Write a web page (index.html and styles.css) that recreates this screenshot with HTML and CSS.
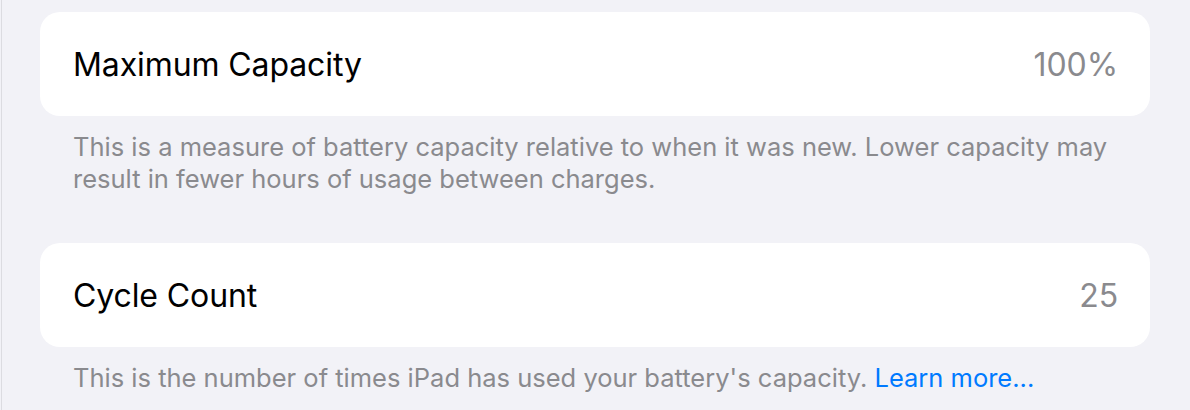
FILE: index.html
```html
<!DOCTYPE html>
<html lang="en">
<head>
<meta charset="utf-8">
<title>Battery Health</title>
<link rel="stylesheet" href="styles.css">
</head>
<body>
<div class="page">
  <section class="group">
    <div class="card">
      <span class="label">Maximum Capacity</span>
      <span class="value">100%</span>
    </div>
    <p class="footer">This is a measure of battery capacity relative to when it was new. Lower capacity may result in fewer hours of usage between charges.</p>
  </section>
  <section class="group">
    <div class="card">
      <span class="label">Cycle Count</span>
      <span class="value">25</span>
    </div>
    <p class="footer">This is the number of times iPad has used your battery's capacity. <a class="link" href="#">Learn more...</a></p>
  </section>
</div>
</body>
</html>
```
FILE: styles.css
```css
html, body {
  margin: 0;
  padding: 0;
  background: #f2f2f7;
}
body {
  font-family: Inter, "Noto Sans", "Liberation Sans", sans-serif;
  -webkit-font-smoothing: antialiased;
}
.page {
  margin-left: 1px;
  border-left: 1px solid #dcdce1;
  padding: 12px 40px 0 38px;
  height: 398px;
  overflow: hidden;
}
.group {
  display: flex;
  flex-direction: column;
}
.group + .group {
  margin-top: 48px;
}
.card {
  background: #ffffff;
  border-radius: 20px;
  height: 104px;
  padding: 0 32px 0 33px;
  display: flex;
  align-items: center;
  justify-content: space-between;
}
.label {
  font-size: 32px;
  color: #000000;
  letter-spacing: -0.1px;
}
.value {
  font-size: 32px;
  color: #8a8a8e;
  letter-spacing: -0.1px;
}
.footer {
  margin: 0;
  padding: 15px 33px 0;
  font-size: 25.5px;
  line-height: 32px;
  color: #8a8a8e;
}
.link {
  color: #007aff;
  text-decoration: none;
}
```
